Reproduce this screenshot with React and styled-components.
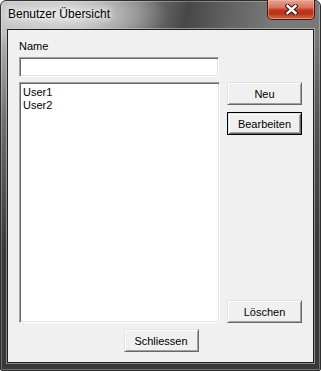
import React from "react";
import styled, { createGlobalStyle, css } from "styled-components";

const Global = createGlobalStyle`
  html, body { margin: 0; padding: 0; background: #ffffff; }
  #root { width: 321px; height: 371px; }
  * { box-sizing: border-box; }
`;

const Window = styled.div`
  width: 321px;
  height: 371px;
  display: flex;
  flex-direction: column;
  border: 1px solid #2e2e2e;
  border-radius: 6px 6px 2px 2px;
  padding: 0 6px 7px 6px;
  box-shadow: inset 0 0 0 1px rgba(255, 255, 255, 0.28);
  background:
    linear-gradient(to bottom, rgba(58, 58, 58, 0) 36px, rgba(58, 58, 58, 0.55) 120px, rgba(56, 56, 56, 1) 250px),
    radial-gradient(ellipse 110px 34px at 58px 14px, rgba(228, 228, 228, 0.95), rgba(200, 200, 200, 0) 100%),
    linear-gradient(100deg, #b4b4b4 0%, #a2a2a2 22%, #7c7c7c 36%, #474747 49%, #5e5e5e 58%, #7a7a7a 72%, #787878 84%, #5a5a5a 100%);
  font-family: "Liberation Sans", Arial, sans-serif;
`;

const TitleBar = styled.div`
  height: 28px;
  display: flex;
  justify-content: space-between;
  align-items: flex-start;
`;

const Title = styled.span`
  padding: 6px 0 0 1px;
  font-size: 12px;
  line-height: 14px;
  color: #000;
  text-shadow:
    0 0 4px rgba(255, 255, 255, 0.95),
    0 0 8px rgba(255, 255, 255, 0.9),
    0 0 14px rgba(255, 255, 255, 0.75);
`;

const CloseButton = styled.button`
  width: 48px;
  height: 20px;
  margin: -1px -1px 0 0;
  padding: 0;
  display: flex;
  align-items: center;
  justify-content: center;
  border: 1px solid #4a1810;
  border-top: none;
  border-radius: 0 0 5px 5px;
  box-shadow: inset 0 0 0 1px rgba(255, 190, 170, 0.45);
  background:
    linear-gradient(to bottom, #e6a596 0%, #d9725d 40%, #c23a22 52%, #b8301a 70%, #cc5a3c 92%, #e07a58 100%);
`;

const Client = styled.div`
  flex: 1;
  display: flex;
  flex-direction: column;
  align-items: flex-start;
  background: #f0f0f0;
  border: 1px solid #1e1e1e;
  box-shadow: 0 0 0 1px rgba(205, 205, 205, 0.55);
  padding: 10px 11px 0 11px;
`;

const Label = styled.label`
  font-size: 11px;
  line-height: 13px;
  color: #000;
`;

const TextBox = styled.input`
  margin-top: 4px;
  width: 200px;
  height: 20px;
  background: #fff;
  border: 1px solid;
  border-color: #a0a0a0 #ffffff #ffffff #a0a0a0;
  box-shadow: inset 1px 1px 0 #696969, inset -1px -1px 0 #e3e3e3;
  outline: none;
  font-family: inherit;
  font-size: 11px;
  padding: 0 3px;
`;

const Row = styled.div`
  margin-top: 5px;
  display: flex;
  gap: 7px;
  align-self: stretch;
`;

const ListBox = styled.div`
  width: 201px;
  height: 241px;
  background: #fff;
  border: 1px solid;
  border-color: #a0a0a0 #ffffff #ffffff #a0a0a0;
  box-shadow: inset 1px 1px 0 #696969, inset -1px -1px 0 #e3e3e3;
  padding: 3px 2px 0 3px;
`;

const ListItem = styled.div`
  font-size: 11px;
  line-height: 13px;
  color: #000;
`;

const ButtonColumn = styled.div`
  width: 75px;
  display: flex;
  flex-direction: column;
  gap: 7px;
`;

const Button = styled.button`
  width: 75px;
  height: 23px;
  flex: none;
  padding: 0;
  background: #f0f0f0;
  font-family: inherit;
  font-size: 11px;
  color: #000;
  border: 1px solid;
  border-color: #e3e3e3 #696969 #696969 #e3e3e3;
  box-shadow: inset 1px 1px 0 #ffffff, inset -1px -1px 0 #a0a0a0;
  ${(p) =>
    p.$default &&
    css`
      border-color: #000;
      box-shadow: inset 1px 1px 0 #e3e3e3, inset -1px -1px 0 #696969, inset 2px 2px 0 #ffffff,
        inset -2px -2px 0 #a0a0a0;
    `}
  ${(p) =>
    p.$bottom &&
    css`
      margin-top: auto;
    `}
`;

const Footer = styled.div`
  margin-top: 6px;
  align-self: stretch;
  display: flex;
  justify-content: center;
  padding-left: 1px;
`;

function CloseGlyph() {
  return (
    <svg width="13" height="11" viewBox="0 0 13 11">
      <g strokeLinecap="square">
        <path d="M2.5 2 L10.5 9 M10.5 2 L2.5 9" stroke="#3a1610" strokeWidth="4.4" />
        <path d="M2.5 2 L10.5 9 M10.5 2 L2.5 9" stroke="#ffffff" strokeWidth="2.4" />
      </g>
    </svg>
  );
}

export default function App() {
  return (
    <>
      <Global />
      <Window>
        <TitleBar>
          <Title>Benutzer Übersicht</Title>
          <CloseButton aria-label="Schließen">
            <CloseGlyph />
          </CloseButton>
        </TitleBar>
        <Client>
          <Label>Name</Label>
          <TextBox />
          <Row>
            <ListBox>
              <ListItem>User1</ListItem>
              <ListItem>User2</ListItem>
            </ListBox>
            <ButtonColumn>
              <Button>Neu</Button>
              <Button $default>Bearbeiten</Button>
              <Button $bottom>Löschen</Button>
            </ButtonColumn>
          </Row>
          <Footer>
            <Button>Schliessen</Button>
          </Footer>
        </Client>
      </Window>
    </>
  );
}
